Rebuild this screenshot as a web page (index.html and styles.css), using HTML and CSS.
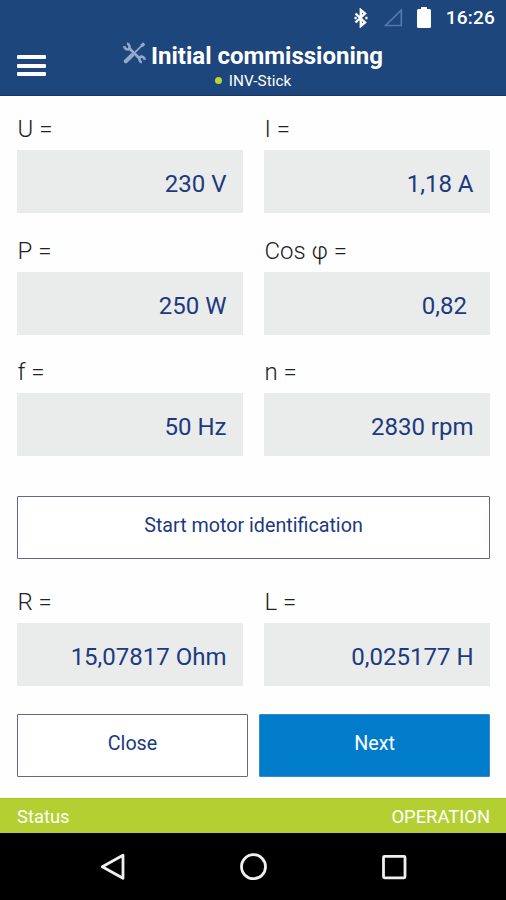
FILE: index.html
```html
<!DOCTYPE html>
<html lang="en">
<head>
    <meta charset="UTF-8" />
    <title>Initial commissioning</title>
    <link rel="stylesheet" href="styles.css">
</head>
<body>
    <header class="header">
        <div class="system-bar">
            <svg class="bluetooth" width="14" height="20" viewBox="0 0 14 20"><path d="M1.5 5.5 11 14.5 6.800 18V2L11 5.5 1.5 14.5" /><path d="M.5 10h2.200M11.300 10h2.200" /></svg>
            <svg class="signal" width="20" height="20" viewBox="0 0 20 20"><path d="M18.3 2.2V17.500H2.6Z" /></svg>
            <svg class="battery" width="14" height="21" viewBox="0 0 14 21"><path d="M4 0h6v2h2.500Q14 2 14 3.500v16Q14 21 12.500 21h-11Q0 21 0 19.500v-16Q0 2 1.500 2H4Z" /></svg>
            <span class="clock">16:26</span>
        </div>
        <div class="title-bar">
            <div class="menu"><span></span><span></span><span></span></div>
            <div class="heading">
                <div class="title">
                    <svg class="tools" width="23" height="22" viewBox="0 0 23 22">
                        <path class="shaft" d="M5.500 5.500 17 17" />
                        <path class="handle" d="M2.800 19.300 9 13.200" />
                        <path class="blade" d="M12 10.300 18.800 3.600" />
                        <path class="tip" d="M18.300 4 21.300 1.500" />
                        <path class="jaw" d="M4 1.500A3.500 3.500 0 0 1 5.500 7.400 3.500 3.500 0 0 1 1.300 4.200M21.700 17.800A3.500 3.500 0 0 0 17.600 14.600 3.500 3.500 0 0 0 18.800 20.500" />
                    </svg>
                    <h1>Initial commissioning</h1>
                </div>
                <div class="device"><span class="dot"></span>INV-Stick</div>
            </div>
        </div>
    </header>

    <main class="content">
        <div class="fields">
            <div class="field"><div class="label">U =</div><div class="value">230 V</div></div>
            <div class="field"><div class="label">I =</div><div class="value">1,18 A</div></div>
            <div class="field"><div class="label">P =</div><div class="value">250 W</div></div>
            <div class="field"><div class="label">Cos φ =</div><div class="value no-unit">0,82</div></div>
            <div class="field"><div class="label">f =</div><div class="value">50 Hz</div></div>
            <div class="field"><div class="label">n =</div><div class="value">2830 rpm</div></div>
        </div>

        <button class="button start">Start motor identification</button>

        <div class="fields">
            <div class="field"><div class="label">R =</div><div class="value">15,07817 Ohm</div></div>
            <div class="field"><div class="label">L =</div><div class="value">0,025177 H</div></div>
        </div>

        <div class="actions">
            <button class="button">Close</button>
            <button class="button primary">Next</button>
        </div>
    </main>

    <div class="status">
        <span>Status</span>
        <span class="state">OPERATION</span>
    </div>

    <nav class="nav-bar">
        <svg width="28" height="28" viewBox="0 0 28 28"><path d="M24 2.300V25.300L3.300 13.800Z" /></svg>
        <svg width="28" height="28" viewBox="0 0 28 28"><circle cx="13.500" cy="13.700" r="12" /></svg>
        <svg width="28" height="28" viewBox="0 0 28 28"><rect x="3.500" y="3.300" width="21.500" height="21.500" rx="1" /></svg>
    </nav>
</body>
</html>
```
FILE: styles.css
```css
:root {
    --navy: #1d467c;
    --text-blue: #1c3a80;
    --blue: #007ccb;
    --green: #b3cf32;
}
* { box-sizing: border-box; }
body {
    margin: 0;
    height: 900px;
    display: flex;
    flex-direction: column;
    font-family: Roboto, sans-serif;
    background: #fefefe;
    overflow: hidden;
}
svg {
    display: block;
    fill: none;
}

/* Header */
.header {
    height: 96px;
    background: var(--navy);
    border-bottom: 1px solid #173866;
    color: #fff;
}
.system-bar {
    height: 36px;
    padding-right: 11px;
    display: flex;
    align-items: center;
    justify-content: flex-end;
}
.bluetooth {
    margin-right: 15px;
    stroke: #fff;
    stroke-width: 2.4;
}
.signal {
    margin-right: 14px;
    stroke: #587aa5;
    stroke-width: 1.6;
}
.battery {
    margin-right: 15px;
    margin-bottom: 2px;
    fill: #fff;
}
.clock {
    font-size: 19px;
    font-weight: 500;
    letter-spacing: 0.2px;
    padding-bottom: 1px;
}
.title-bar {
    display: grid;
    grid-template-columns: 46px 1fr 46px;
}
.menu {
    padding: 19px 0 0 17px;
    display: flex;
    flex-direction: column;
    gap: 4.5px;
}
.menu span {
    height: 4px;
    width: 29px;
    border-radius: 1px;
    background: #fff;
}
.heading {
    display: flex;
    flex-direction: column;
    align-items: center;
}
.title {
    display: flex;
    height: 37px;
    padding-top: 6px;
    gap: 5px;
}
.tools {
    stroke: #93a9c9;
}
.shaft { stroke-width: 2.8; }
.handle { stroke-width: 4; stroke-linecap: round; }
.blade { stroke-width: 1.8; }
.tip { stroke-width: 3.2; }
.jaw { stroke-width: 2.6; }
h1 {
    margin: 0;
    font-size: 24px;
    line-height: 28px;
    font-weight: 700;
}
.device {
    display: flex;
    align-items: center;
    gap: 7px;
    height: 16px;
    font-size: 15.3px;
}
.dot {
    width: 7px;
    height: 7px;
    margin-bottom: 1px;
    border-radius: 50%;
    background: #b9d532;
}

/* Motor parameters */
.content {
    height: 702px;
    padding: 17.8px 16px 0 17px;
}
.fields {
    display: grid;
    grid-template-columns: 1fr 1fr;
    gap: 22.8px 21px;
}
.label {
    height: 36px;
    padding-left: 0.5px;
    font-size: 24px;
    line-height: 30px;
    font-weight: 300;
    color: #222;
}
.value {
    height: 63px;
    padding-right: 16.5px;
    font-size: 24px;
    line-height: 68px;
    text-align: right;
    color: var(--text-blue);
    background: #eaeceb;
}
.value.no-unit { padding-right: 23px; }

/* Buttons */
.button {
    height: 63px;
    padding: 0 0 5px;
    font-family: inherit;
    font-size: 19.7px;
    color: var(--text-blue);
    background: #fff;
    border: 1px solid #66668c;
    border-radius: 1px;
}
.start {
    display: block;
    width: 100%;
    margin: 39.8px 0 28.2px;
}
.actions {
    display: grid;
    grid-template-columns: 1fr 1fr;
    gap: 11px;
    margin-top: 28px;
}
.primary {
    color: #fff;
    background: var(--blue);
    border-color: #3d87c9;
}

/* Status strip and Android navigation */
.status {
    height: 35px;
    padding: 0 16px 0 17px;
    display: flex;
    align-items: center;
    justify-content: space-between;
    font-size: 18.4px;
    color: #fff;
    background: var(--green);
    border-top: 1px solid #a9c41a;
}
.nav-bar {
    flex: 1;
    padding: 20px 98px 0 99px;
    display: flex;
    justify-content: space-between;
    background: #000;
    stroke: #f0f0f0;
    stroke-width: 2.8;
    stroke-linejoin: round;
}
```
